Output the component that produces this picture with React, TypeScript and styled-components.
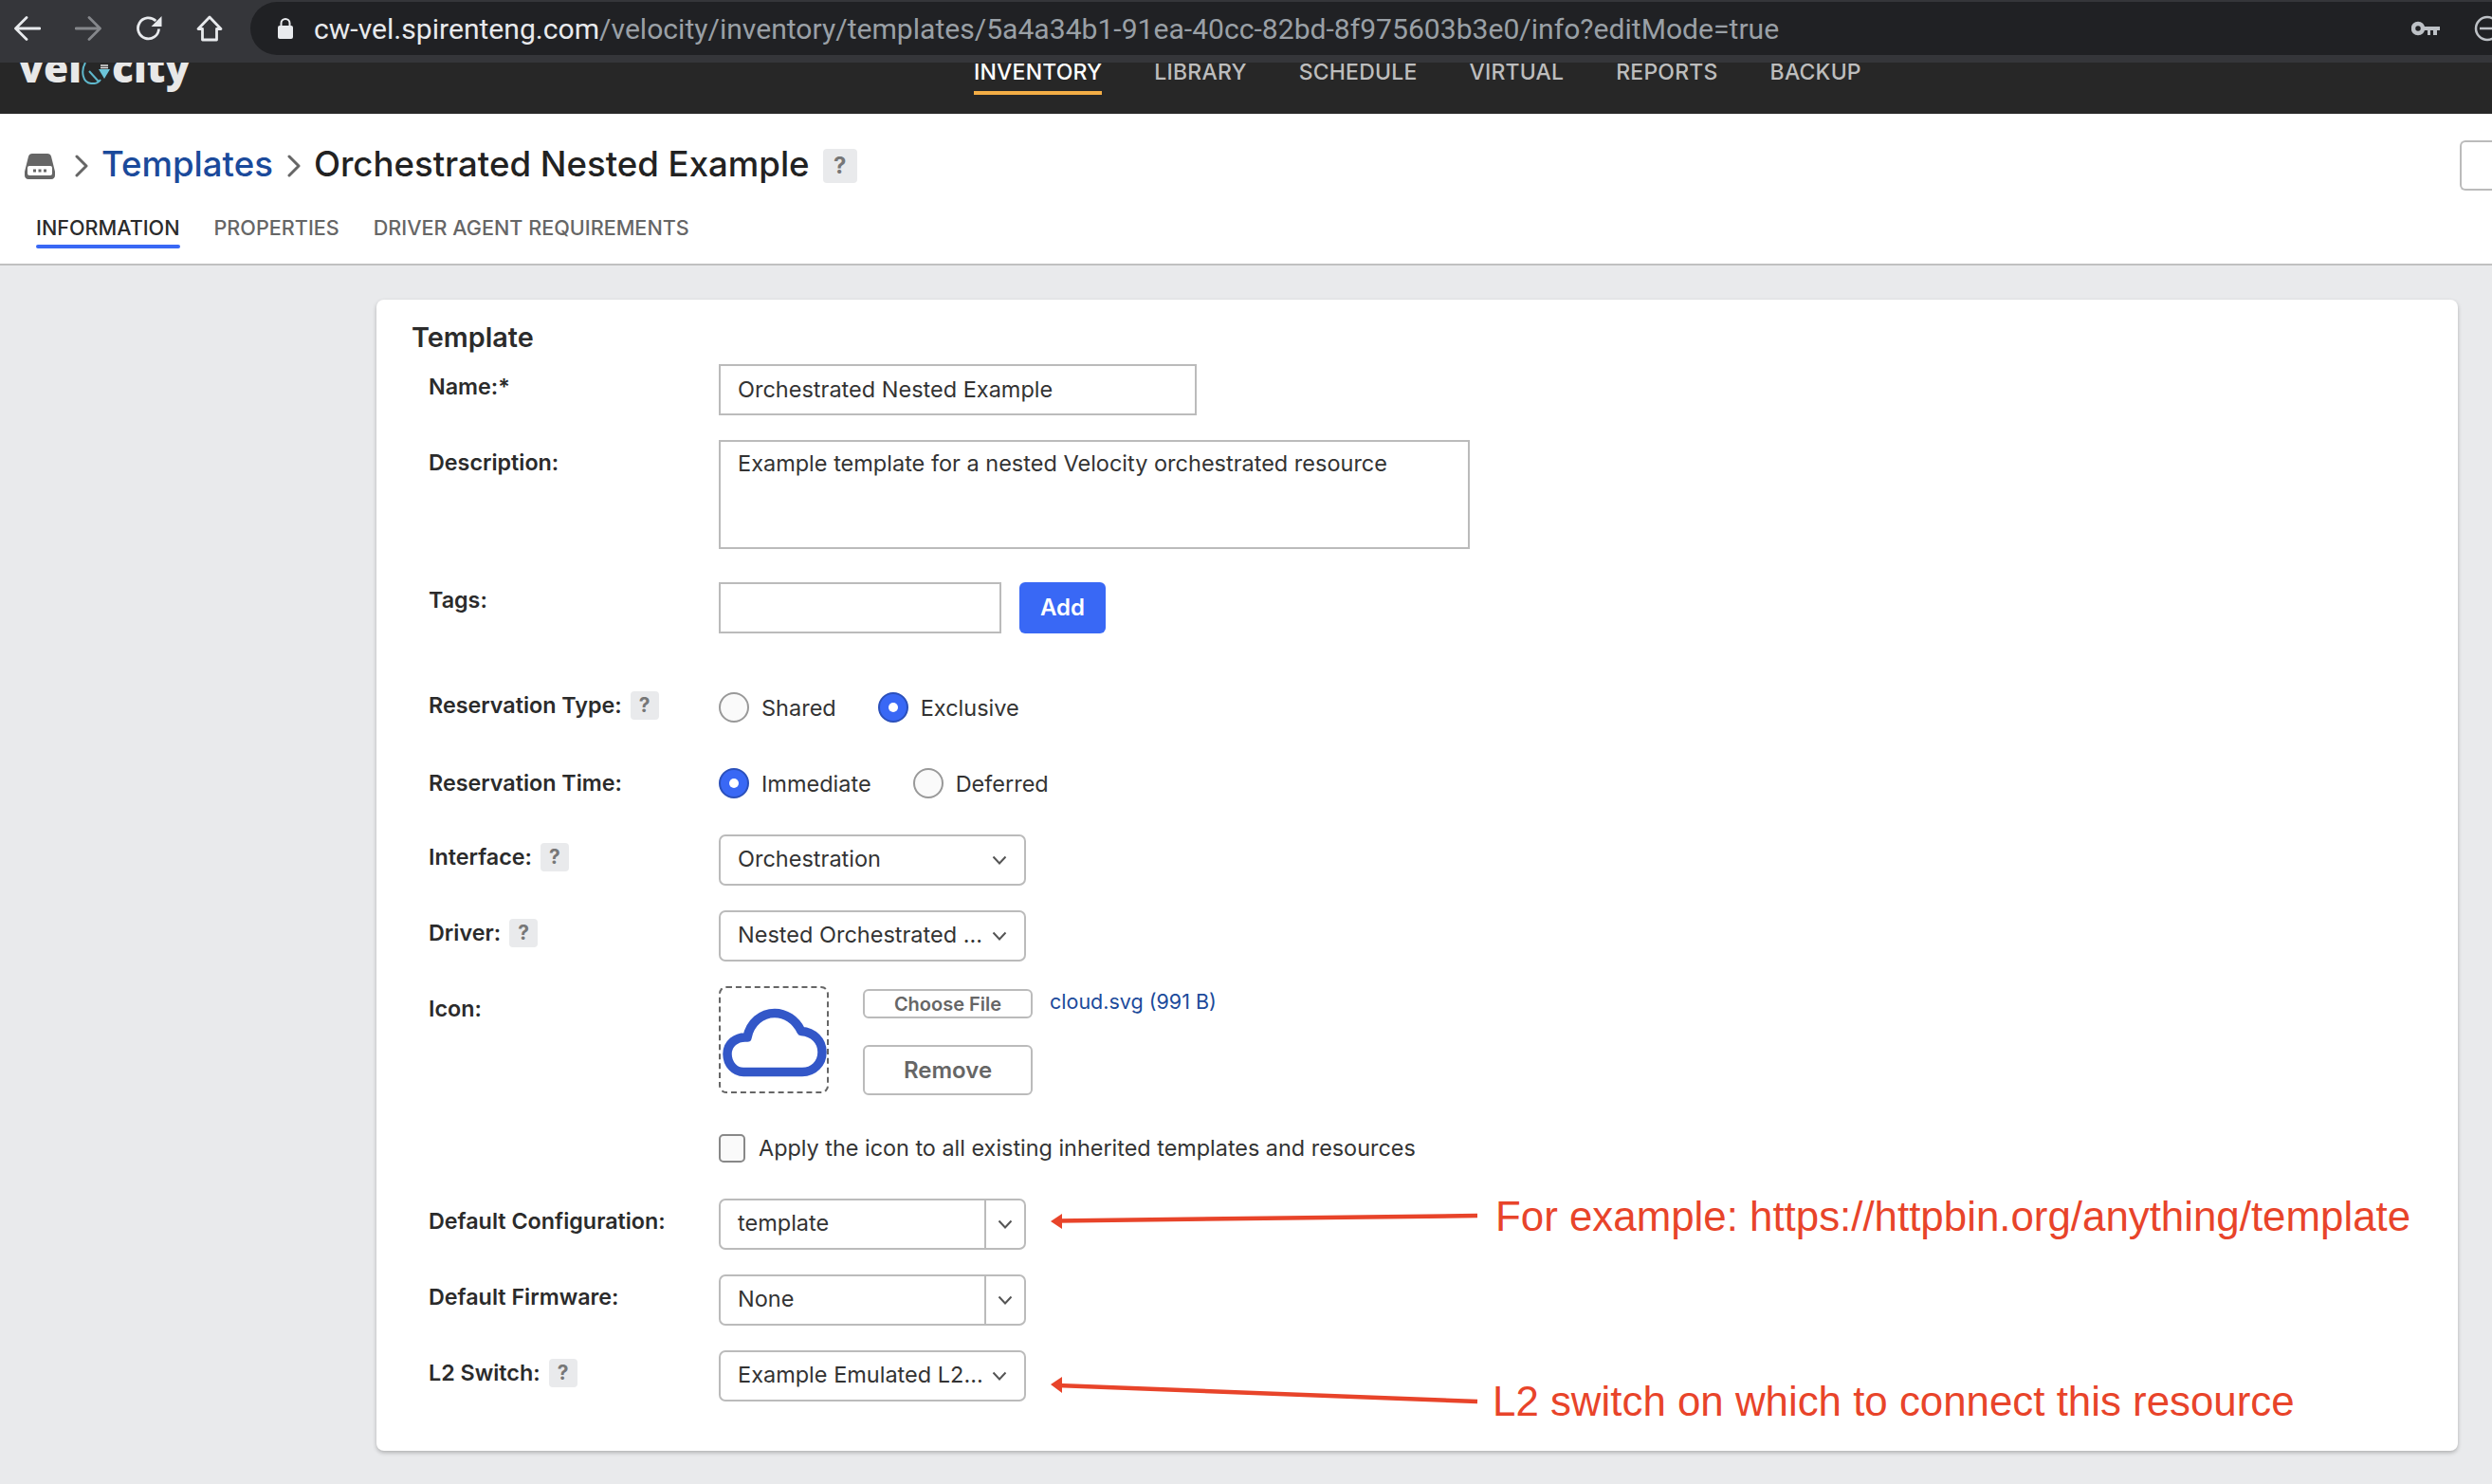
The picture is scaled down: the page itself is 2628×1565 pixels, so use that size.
import * as React from "react";
import styled, { createGlobalStyle } from "styled-components";

const GlobalStyle = createGlobalStyle`
  html, body {
    margin: 0;
    padding: 0;
    background: #e9eaec;
  }
  * {
    box-sizing: border-box;
  }
`;

const Page = styled.div`
  width: 2628px;
  height: 1565px;
  overflow: hidden;
  display: flex;
  flex-direction: column;
  font-family: Inter, "Liberation Sans", sans-serif;
  color: #2b2b2b;
`;

// Browser chrome
const BrowserBar = styled.div`
  height: 66px;
  flex: none;
  background: #35363a;
  display: flex;
  align-items: flex-start;
  padding-left: 15px;
  overflow: hidden;
`;

const ChromeIcon = styled.svg`
  width: 28px;
  height: 28px;
  margin: 16px 36px 0 0;
  flex: none;
  &:nth-child(4) {
    margin-right: 29px;
  }
`;

const AddressPill = styled.div`
  flex: 1;
  height: 56px;
  margin: 2px -63px 0 0;
  padding: 0 58px 0 28px;
  border-radius: 28px 0 0 28px;
  background: #202124;
  display: flex;
  align-items: center;
`;

const Url = styled.div`
  flex: 1;
  margin-left: 21px;
  font: 400 30.1px Roboto, sans-serif;
  color: #9aa0a6;
  white-space: nowrap;
  b {
    font-weight: 400;
    color: #e8eaed;
  }
`;

const ProfileIcon = styled.svg`
  margin-left: 34px;
  flex: none;
`;

// App nav, partly scrolled under the browser bar
const Nav = styled.div`
  height: 54px;
  flex: none;
  background: #272727;
  display: flex;
  align-items: flex-end;
  overflow: hidden;
  padding-left: 20px;
`;

const Logo = styled.div`
  width: 1007px;
  flex: none;
  display: flex;
  align-items: flex-end;
  height: 54px;
  font: 800 42.5px/54px "Open Sans", sans-serif;
  color: #e8e8e8;
  span {
    position: relative;
    top: -22px;
  }
  svg {
    width: 32px;
    height: 28px;
    margin-bottom: 31px;
    flex: none;
  }
`;

const NavItem = styled.div<{ $active?: boolean }>`
  font-size: 23px;
  line-height: 26px;
  font-weight: 500;
  letter-spacing: 0.2px;
  margin-right: 55px;
  padding-bottom: 7px;
  margin-bottom: 20px;
  white-space: nowrap;
  color: ${(p) => (p.$active ? "#ffffff" : "#bdbdbd")};
  border-bottom: 4px solid ${(p) => (p.$active ? "#f3ad45" : "transparent")};
`;

// Page header
const Header = styled.div`
  height: 160px;
  flex: none;
  background: #fff;
  border-bottom: 2px solid #c0c0c0;
  padding-top: 28px;
`;

const Crumbs = styled.div`
  height: 53px;
  display: flex;
  align-items: center;
  padding-left: 25px;
  font-size: 36.6px;
  font-weight: 500;
  white-space: nowrap;
`;

const CrumbIcon = styled.svg`
  width: 34px;
  height: 28px;
  flex: none;
`;

const CrumbChevron = styled.svg<{ $first?: boolean }>`
  width: 14px;
  height: 24px;
  flex: none;
  margin: ${(p) => (p.$first ? "0 14px 0 20px" : "0 14px 0 15px")};
`;

const CrumbLink = styled.span`
  color: #1b4a9b;
  margin-bottom: 3px;
`;

const CrumbTitle = styled.span`
  color: #222;
  margin: 0 14px 3px 0;
`;

const HelpBadge = styled.span<{ $big?: boolean }>`
  display: inline-flex;
  align-items: center;
  justify-content: center;
  flex: none;
  width: ${(p) => (p.$big ? 36 : 30)}px;
  height: ${(p) => (p.$big ? 36 : 30)}px;
  border-radius: 4px;
  background: #e9eaec;
  color: #777;
  font-size: ${(p) => (p.$big ? 24 : 21)}px;
  font-weight: 700;
`;

const CutOffButton = styled.div`
  margin-left: auto;
  width: 34px;
  height: 53px;
  border: 2px solid #bbb;
  border-right: 0;
  border-radius: 6px 0 0 6px;
`;

const Tabs = styled.div`
  display: flex;
  gap: 36px;
  margin-top: 24px;
  padding-left: 38px;
`;

const Tab = styled.div<{ $active?: boolean }>`
  font-size: 21.6px;
  line-height: 30px;
  font-weight: 500;
  white-space: nowrap;
  color: ${(p) => (p.$active ? "#2b2b2b" : "#666")};
  &::after {
    content: "";
    display: block;
    height: 4px;
    margin-top: 3px;
    border-radius: 2px;
    background: ${(p) => (p.$active ? "#3968f5" : "transparent")};
  }
`;

// Card with the form
const Card = styled.div`
  position: relative;
  margin: 36px 36px 0 397px;
  height: 1214px;
  background: #fff;
  border-radius: 8px;
  box-shadow: 0 2px 4px rgba(0, 0, 0, 0.25);
  padding: 23px 0 0 38px;
`;

const CardTitle = styled.h2`
  margin: 0 0 0 -1px;
  font-size: 28.8px;
  line-height: 34px;
  font-weight: 600;
  color: #2b2b2b;
`;

const Row = styled.div<{ $top: number }>`
  display: grid;
  grid-template-columns: 323px 1fr;
  margin-top: ${(p) => p.$top}px;
`;

const Label = styled.div<{ $offset?: number }>`
  padding: ${(p) => p.$offset ?? 8}px 0 0 17px;
  font-size: 23.3px;
  line-height: 32px;
  font-weight: 600;
  color: #2b2b2b;
  white-space: nowrap;
  display: flex;
  align-items: flex-start;
  gap: 9px;
`;

const LabelBadge = styled(HelpBadge)`
  margin-top: 1px;
`;

const Controls = styled.div<{ $top?: boolean }>`
  display: flex;
  align-items: ${(p) => (p.$top ? "flex-start" : "center")};
  min-width: 0;
`;

const TextField = styled.input<{ $width: number }>`
  display: block;
  width: ${(p) => p.$width}px;
  height: 54px;
  padding: 0 18px 2px;
  border: 2px solid #bbb;
  border-radius: 0;
  outline: none;
  background: #fff;
  font: 400 23.5px Inter, sans-serif;
  color: #333;
`;

const TextBlock = styled.textarea`
  display: block;
  width: 792px;
  height: 115px;
  padding: 7px 18px;
  border: 2px solid #bbb;
  border-radius: 0;
  outline: none;
  resize: none;
  background: #fff;
  font: 400 23.5px/32px Inter, sans-serif;
  color: #333;
`;

const AddButton = styled.button`
  width: 91px;
  height: 54px;
  margin-left: 19px;
  padding: 0 0 2px;
  border: 0;
  border-radius: 6px;
  background: #3968f5;
  color: #fff;
  font: 600 24px Inter, sans-serif;
`;

const RadioGroup = styled.div`
  display: flex;
  align-items: center;
  height: 36px;
`;

const RadioDot = styled.span<{ $on?: boolean }>`
  width: 32px;
  height: 32px;
  flex: none;
  border-radius: 50%;
  display: inline-flex;
  align-items: center;
  justify-content: center;
  border: 2px solid ${(p) => (p.$on ? "#2b50bb" : "#999")};
  background: ${(p) => (p.$on ? "#3968f5" : "#fafafa")};
  &::after {
    content: "";
    width: 10px;
    height: 10px;
    border-radius: 50%;
    background: ${(p) => (p.$on ? "#fff" : "transparent")};
  }
`;

const RadioText = styled.span`
  margin: 0 44px 0 13px;
  font-size: 23.5px;
  color: #333;
  white-space: nowrap;
`;

const Select = styled.div`
  width: 324px;
  height: 54px;
  display: grid;
  grid-template-columns: 1fr 42px;
  align-items: stretch;
  border: 2px solid #bbb;
  border-radius: 7px;
  background: #fff;
  font-size: 23.5px;
  color: #333;
  white-space: nowrap;
`;

const SelectValue = styled.div`
  padding: 0 0 3px 18px;
  display: flex;
  align-items: center;
`;

const SelectCaret = styled.div<{ $split?: boolean }>`
  display: flex;
  align-items: center;
  justify-content: ${(p) => (p.$split ? "center" : "flex-start")};
  padding-left: ${(p) => (p.$split ? 0 : 8)}px;
  border-left: ${(p) => (p.$split ? "2px solid #bbb" : "0")};
  svg {
    width: 16px;
    height: 10px;
  }
`;

const IconDrop = styled.div`
  width: 116px;
  height: 113px;
  flex: none;
  border: 2px dashed #666;
  border-radius: 8px;
  svg {
    display: block;
    width: 116px;
    height: 113px;
    margin: -2px;
  }
`;

const FileColumn = styled.div`
  width: 179px;
  margin-left: 36px;
  display: flex;
  flex-direction: column;
`;

const ChooseButton = styled.button`
  height: 31px;
  margin-top: 3px;
  padding: 0;
  border: 2px solid #bbb;
  border-radius: 6px;
  background: #fff;
  color: #666;
  font: 600 20px Inter, sans-serif;
`;

const RemoveButton = styled.button`
  height: 53px;
  margin-top: 28px;
  padding: 0;
  border: 2px solid #bbb;
  border-radius: 6px;
  background: #fff;
  color: #666;
  font: 600 24px Inter, sans-serif;
`;

const FileName = styled.a`
  align-self: flex-start;
  margin: 0 0 0 18px;
  font-size: 21.5px;
  line-height: 32px;
  color: #1b4a9b;
  white-space: nowrap;
`;

const Checkbox = styled.span`
  width: 28px;
  height: 30px;
  flex: none;
  border: 2px solid #888;
  border-radius: 5px;
  background: #fafafa;
`;

const CheckText = styled.span`
  margin-left: 14px;
  font-size: 23.4px;
  line-height: 30px;
  color: #333;
  white-space: nowrap;
`;

// Red annotations drawn on top of the screenshot
const Arrow = styled.svg<{ $top: number }>`
  position: absolute;
  left: 700px;
  top: ${(p) => p.$top}px;
  width: 470px;
  height: 40px;
  overflow: visible;
`;

const Note = styled.div<{ $left: number; $top: number }>`
  position: absolute;
  left: ${(p) => p.$left}px;
  top: ${(p) => p.$top}px;
  font: 400 43.85px/50px "Liberation Sans", Arial, sans-serif;
  color: #e8442a;
  white-space: nowrap;
`;

const Caret = () => (
  <svg viewBox="0 0 16 10" fill="none" stroke="#555" strokeWidth="2">
    <path d="M1.5 1.5L8 8.5l6.5-7" />
  </svg>
);

const DropDown = ({ value, split }: { value: string; split?: boolean }) => (
  <Select>
    <SelectValue>{value}</SelectValue>
    <SelectCaret $split={split}>
      <Caret />
    </SelectCaret>
  </Select>
);

const navItems = ["LIBRARY", "SCHEDULE", "VIRTUAL", "REPORTS", "BACKUP"];

export default function App() {
  return (
    <Page>
      <GlobalStyle />
      <BrowserBar>
        <ChromeIcon viewBox="0 0 28 28" fill="none" stroke="#e8eaed" strokeWidth="2.8" strokeLinecap="round" strokeLinejoin="round">
          <path d="M27 14H2M13 2.5L1.5 14 13 25.5" />
        </ChromeIcon>
        <ChromeIcon viewBox="0 0 28 28" fill="none" stroke="#85878b" strokeWidth="2.8" strokeLinecap="round" strokeLinejoin="round">
          <path d="M1 14h25M15 2.5L26.5 14 15 25.5" />
        </ChromeIcon>
        <ChromeIcon viewBox="0 0 28 28" fill="none" stroke="#e8eaed" strokeWidth="2.8">
          <path d="M24.5 14.5a11 11 0 1 1-3.2-8.4" />
          <path d="M27.5 1v11h-11z" fill="#e8eaed" stroke="none" />
        </ChromeIcon>
        <ChromeIcon viewBox="0 0 28 28" fill="none" stroke="#e8eaed" strokeWidth="2.8" strokeLinejoin="round">
          <path d="M14 2L2 14.5h4.5V26h15V14.5H26z" />
        </ChromeIcon>
        <AddressPill>
          <svg width="18" height="24" viewBox="0 0 18 24">
            <path d="M4.5 10V6.5a4.5 4.5 0 0 1 9 0V10" fill="none" stroke="#e8eaed" strokeWidth="2" />
            <rect x="1" y="9" width="16" height="14" rx="2" fill="#e8eaed" />
          </svg>
          <Url>
            <b>cw-vel.spirenteng.com</b>/velocity/inventory/templates/5a4a34b1-91ea-40cc-82bd-8f975603b3e0/info?editMode=true
          </Url>
          <svg width="30" height="16" viewBox="0 0 30 16">
            <circle cx="7" cy="8" r="5" fill="none" stroke="#bdc1c6" strokeWidth="4.500" />
            <path d="M12 6h18v4h-3v5h-4v-5h-3v5h-3v-5h-5z" fill="#bdc1c6" />
          </svg>
          <ProfileIcon width="26" height="32" viewBox="0 0 26 32">
            <circle cx="16" cy="16" r="12" fill="none" stroke="#bdc1c6" strokeWidth="2.5" />
            <path d="M8 16h16" stroke="#bdc1c6" strokeWidth="2.5" />
          </ProfileIcon>
        </AddressPill>
      </BrowserBar>

      <Nav>
        <Logo>
          <span>vel</span>
          <svg viewBox="0 0 32 28" fill="none">
            <path d="M4 5C-1 14 1 26 10 27c4 .5 8-1 10-4" stroke="#5fb8cc" strokeWidth="2" />
            <path d="M8 14l10 11" stroke="#5fb8cc" strokeWidth="2" />
            <path d="M18 12h12l-6 10z" fill="#6cc4d8" />
            <path d="M20 8h8M20 10.500h8" stroke="#e8e8e8" strokeWidth="1.500" />
          </svg>
          <span>city</span>
        </Logo>
        <NavItem $active>INVENTORY</NavItem>
        {navItems.map((item) => (
          <NavItem key={item}>{item}</NavItem>
        ))}
      </Nav>

      <Header>
        <Crumbs>
          <CrumbIcon viewBox="0 0 34 28">
            <path d="M9 1h16c2 0 3.500 1 4 3l4 16v4c0 2-1.500 4-4 4H5c-2.500 0-4-2-4-4v-4L5 4c.5-2 2-3 4-3z" fill="#666" />
            <rect x="4" y="14" width="26" height="10" rx="2" fill="#fff" />
            <rect x="10" y="17.500" width="3" height="3" fill="#666" />
            <rect x="15.500" y="17.500" width="3" height="3" fill="#666" />
            <rect x="21" y="17.500" width="3" height="3" fill="#666" />
          </CrumbIcon>
          <CrumbChevron $first viewBox="0 0 14 24" fill="none" stroke="#666" strokeWidth="3" strokeLinecap="round" strokeLinejoin="round">
            <path d="M2 2l10 10L2 22" />
          </CrumbChevron>
          <CrumbLink>Templates</CrumbLink>
          <CrumbChevron viewBox="0 0 14 24" fill="none" stroke="#666" strokeWidth="3" strokeLinecap="round" strokeLinejoin="round">
            <path d="M2 2l10 10L2 22" />
          </CrumbChevron>
          <CrumbTitle>Orchestrated Nested Example</CrumbTitle>
          <HelpBadge $big>?</HelpBadge>
          <CutOffButton />
        </Crumbs>
        <Tabs>
          <Tab $active>INFORMATION</Tab>
          <Tab>PROPERTIES</Tab>
          <Tab>DRIVER AGENT REQUIREMENTS</Tab>
        </Tabs>
      </Header>

      <Card>
        <CardTitle>Template</CardTitle>

        <Row $top={11}>
          <Label>Name:*</Label>
          <Controls>
            <TextField $width={504} readOnly value="Orchestrated Nested Example" />
          </Controls>
        </Row>
        <Row $top={26}>
          <Label>Description:</Label>
          <Controls>
            <TextBlock readOnly value="Example template for a nested Velocity orchestrated resource" />
          </Controls>
        </Row>
        <Row $top={35}>
          <Label $offset={3}>Tags:</Label>
          <Controls>
            <TextField $width={298} readOnly value="" />
            <AddButton>Add</AddButton>
          </Controls>
        </Row>
        <Row $top={60}>
          <Label $offset={0}>
            Reservation Type: <LabelBadge>?</LabelBadge>
          </Label>
          <RadioGroup>
            <RadioDot />
            <RadioText>Shared</RadioText>
            <RadioDot $on />
            <RadioText>Exclusive</RadioText>
          </RadioGroup>
        </Row>
        <Row $top={44}>
          <Label $offset={2}>Reservation Time:</Label>
          <RadioGroup>
            <RadioDot $on />
            <RadioText>Immediate</RadioText>
            <RadioDot />
            <RadioText>Deferred</RadioText>
          </RadioGroup>
        </Row>
        <Row $top={36}>
          <Label>
            Interface: <LabelBadge>?</LabelBadge>
          </Label>
          <DropDown value="Orchestration" />
        </Row>
        <Row $top={26}>
          <Label>
            Driver: <LabelBadge>?</LabelBadge>
          </Label>
          <DropDown value="Nested Orchestrated ..." />
        </Row>
        <Row $top={26}>
          <Label>Icon:</Label>
          <Controls $top>
            <IconDrop>
              <svg viewBox="0 0 116 113" fill="none">
                <path
                  d="M26 90.500h62c12 0 21-9 21-21 0-12-9-21-22-22C81 35 70 28.500 59 28.500c-14 0-26 10-29 25.500-12-1-21 7-21 17.500 0 11 8 19 17 19z"
                  stroke="#3357c8"
                  strokeWidth="9.500"
                  strokeLinejoin="round"
                />
              </svg>
            </IconDrop>
            <FileColumn>
              <ChooseButton>Choose File</ChooseButton>
              <RemoveButton>Remove</RemoveButton>
            </FileColumn>
            <FileName>cloud.svg (991 B)</FileName>
          </Controls>
        </Row>
        <Row $top={41}>
          <div />
          <Controls>
            <Checkbox />
            <CheckText>Apply the icon to all existing inherited templates and resources</CheckText>
          </Controls>
        </Row>
        <Row $top={38}>
          <Label $offset={8}>Default Configuration:</Label>
          <DropDown value="template" split />
        </Row>
        <Row $top={26}>
          <Label $offset={8}>Default Firmware:</Label>
          <DropDown value="None" split />
        </Row>
        <Row $top={26}>
          <Label $offset={8}>
            L2 Switch: <LabelBadge>?</LabelBadge>
          </Label>
          <DropDown value="Example Emulated L2..." />
        </Row>

        <Arrow $top={950} viewBox="0 0 470 40">
          <path d="M461 16L18 21.500" stroke="#e8442a" strokeWidth="4.500" />
          <path d="M11 22l12-8v16z" fill="#e8442a" />
        </Arrow>
        <Note $left={1180} $top={942}>For example: https://httpbin.org/anything/template</Note>
        <Arrow $top={1130} viewBox="0 0 470 40">
          <path d="M461 32L18 15" stroke="#e8442a" strokeWidth="4.500" />
          <path d="M11 14l12-8v17z" fill="#e8442a" />
        </Arrow>
        <Note $left={1177} $top={1137}>L2 switch on which to connect this resource</Note>
      </Card>
    </Page>
  );
}
